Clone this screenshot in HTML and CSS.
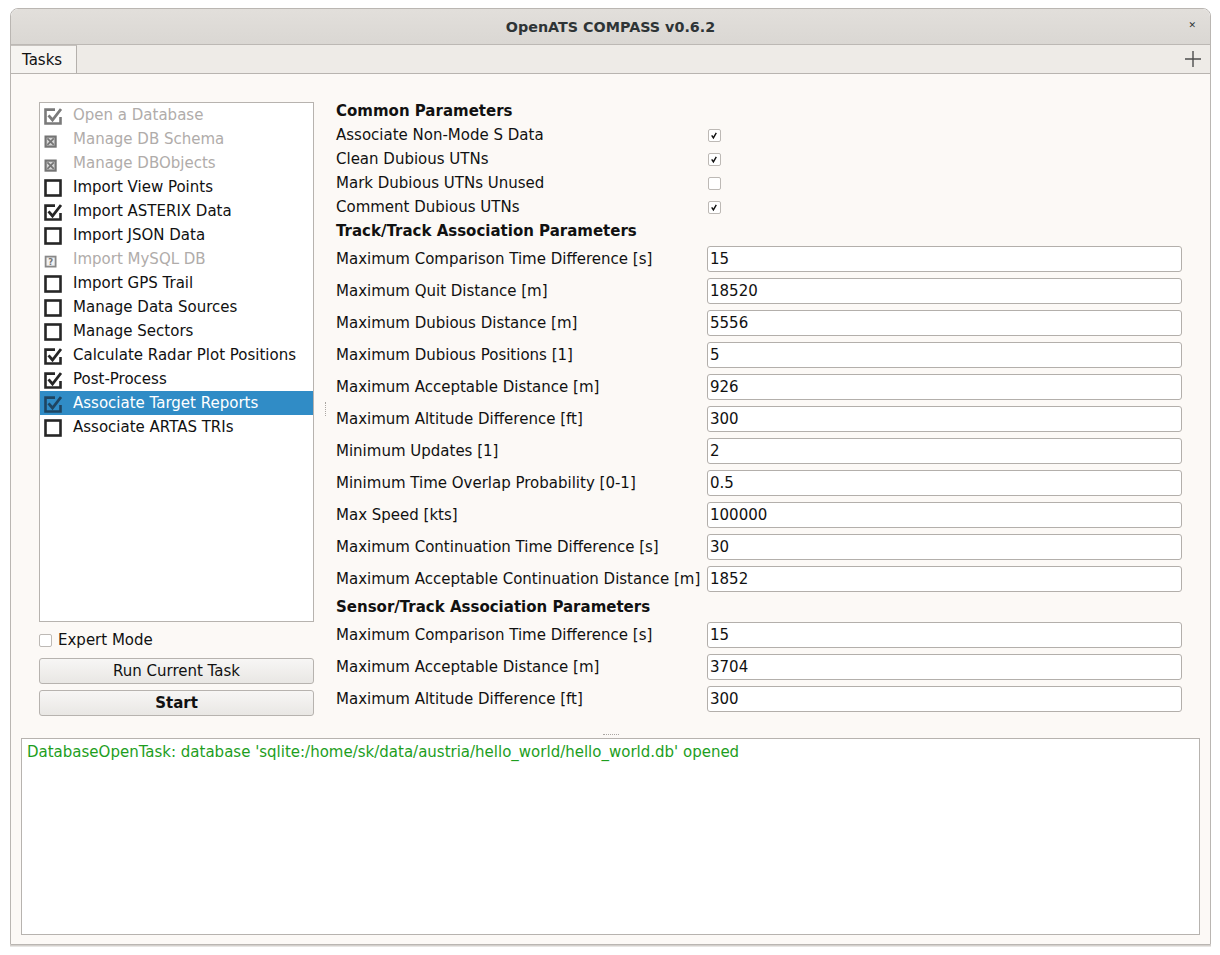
FILE: index.html
```html
<!DOCTYPE html>
<html>
<head>
<meta charset="utf-8">
<title>OpenATS COMPASS v0.6.2</title>
<link rel="stylesheet" href="styles.css">
</head>
<body>
<div class="window">
  <div class="titlebar">
    <span class="title">OpenATS COMPASS v0.6.2</span>
    <span class="close">&#x2715;</span>
  </div>
  <div class="tabbar">
    <div class="tab">Tasks</div>
    <svg class="plus" viewBox="0 0 16 16" width="16" height="16"><path d="M8 0V16M0 8H16" stroke="#4d4d4d" stroke-width="1.4" fill="none"/></svg>
  </div>
  <div class="page">
    <div class="upper">
      <div class="left">
        <div class="list">
          <div class="item disabled"><svg class="ico" viewBox="0 0 18 18"><path d="M11 2.6H1.5V16.5H16.5V10" fill="none" stroke="#7a7a7a" stroke-width="2.6"/><path d="M4.5 8.3L8.5 13L17 2" fill="none" stroke="#7a7a7a" stroke-width="2.8"/></svg>Open a Database</div>
          <div class="item disabled"><svg class="ico" viewBox="0 0 18 18"><rect x="1.6" y="5.6" width="10" height="10" fill="#d6d6d6" stroke="#747474" stroke-width="2.2"/><path d="M3.4 7.4L9.8 13.8M9.8 7.4L3.4 13.8" stroke="#747474" stroke-width="1.7"/></svg>Manage DB Schema</div>
          <div class="item disabled"><svg class="ico" viewBox="0 0 18 18"><rect x="1.6" y="5.6" width="10" height="10" fill="#d6d6d6" stroke="#747474" stroke-width="2.2"/><path d="M3.4 7.4L9.8 13.8M9.8 7.4L3.4 13.8" stroke="#747474" stroke-width="1.7"/></svg>Manage DBObjects</div>
          <div class="item"><svg class="ico" viewBox="0 0 18 18"><rect x="1.5" y="1.5" width="15" height="15" fill="none" stroke="#262626" stroke-width="2.6"/></svg>Import View Points</div>
          <div class="item"><svg class="ico" viewBox="0 0 18 18"><path d="M11 2.6H1.5V16.5H16.5V10" fill="none" stroke="#262626" stroke-width="2.6"/><path d="M4.5 8.3L8.5 13L17 2" fill="none" stroke="#262626" stroke-width="2.8"/></svg>Import ASTERIX Data</div>
          <div class="item"><svg class="ico" viewBox="0 0 18 18"><rect x="1.5" y="1.5" width="15" height="15" fill="none" stroke="#262626" stroke-width="2.6"/></svg>Import JSON Data</div>
          <div class="item disabled"><svg class="ico" viewBox="0 0 18 18"><rect x="1.6" y="5.6" width="10" height="10" fill="#f2f2f2" stroke="#888888" stroke-width="1.8"/><text x="6.6" y="14" text-anchor="middle" class="qmark">?</text></svg>Import MySQL DB</div>
          <div class="item"><svg class="ico" viewBox="0 0 18 18"><rect x="1.5" y="1.5" width="15" height="15" fill="none" stroke="#262626" stroke-width="2.6"/></svg>Import GPS Trail</div>
          <div class="item"><svg class="ico" viewBox="0 0 18 18"><rect x="1.5" y="1.5" width="15" height="15" fill="none" stroke="#262626" stroke-width="2.6"/></svg>Manage Data Sources</div>
          <div class="item"><svg class="ico" viewBox="0 0 18 18"><rect x="1.5" y="1.5" width="15" height="15" fill="none" stroke="#262626" stroke-width="2.6"/></svg>Manage Sectors</div>
          <div class="item"><svg class="ico" viewBox="0 0 18 18"><path d="M11 2.6H1.5V16.5H16.5V10" fill="none" stroke="#262626" stroke-width="2.6"/><path d="M4.5 8.3L8.5 13L17 2" fill="none" stroke="#262626" stroke-width="2.8"/></svg>Calculate Radar Plot Positions</div>
          <div class="item"><svg class="ico" viewBox="0 0 18 18"><path d="M11 2.6H1.5V16.5H16.5V10" fill="none" stroke="#262626" stroke-width="2.6"/><path d="M4.5 8.3L8.5 13L17 2" fill="none" stroke="#262626" stroke-width="2.8"/></svg>Post-Process</div>
          <div class="item selected"><svg class="ico" viewBox="0 0 18 18"><path d="M11 2.6H1.5V16.5H16.5V10" fill="none" stroke="#1f4561" stroke-width="2.6"/><path d="M4.5 8.3L8.5 13L17 2" fill="none" stroke="#1f4561" stroke-width="2.8"/></svg>Associate Target Reports</div>
          <div class="item"><svg class="ico" viewBox="0 0 18 18"><rect x="1.5" y="1.5" width="15" height="15" fill="none" stroke="#262626" stroke-width="2.6"/></svg>Associate ARTAS TRIs</div>
        </div>
        <label class="expert"><span class="cb"></span>Expert Mode</label>
        <div class="btn run">Run Current Task</div>
        <div class="btn start">Start</div>
      </div>
      <div class="vhandle"><span class="vdots"></span></div>
      <div class="right">
        <div class="heading">Common Parameters</div>
        <div class="row"><span class="lbl">Associate Non-Mode S Data</span><span class="cb checked"><svg viewBox="0 0 13 13" width="11" height="11"><path d="M3.2 6.3L5.2 9.3L8.6 3.4" fill="none" stroke="#111" stroke-width="1.7"/></svg></span></div>
        <div class="row"><span class="lbl">Clean Dubious UTNs</span><span class="cb checked"><svg viewBox="0 0 13 13" width="11" height="11"><path d="M3.2 6.3L5.2 9.3L8.6 3.4" fill="none" stroke="#111" stroke-width="1.7"/></svg></span></div>
        <div class="row"><span class="lbl">Mark Dubious UTNs Unused</span><span class="cb"></span></div>
        <div class="row"><span class="lbl">Comment Dubious UTNs</span><span class="cb checked"><svg viewBox="0 0 13 13" width="11" height="11"><path d="M3.2 6.3L5.2 9.3L8.6 3.4" fill="none" stroke="#111" stroke-width="1.7"/></svg></span></div>
        <div class="heading">Track/Track Association Parameters</div>
        <div class="irow"><span class="lbl">Maximum Comparison Time Difference [s]</span><span class="input">15</span></div>
        <div class="irow"><span class="lbl">Maximum Quit Distance [m]</span><span class="input">18520</span></div>
        <div class="irow"><span class="lbl">Maximum Dubious Distance [m]</span><span class="input">5556</span></div>
        <div class="irow"><span class="lbl">Maximum Dubious Positions [1]</span><span class="input">5</span></div>
        <div class="irow"><span class="lbl">Maximum Acceptable Distance [m]</span><span class="input">926</span></div>
        <div class="irow"><span class="lbl">Maximum Altitude Difference [ft]</span><span class="input">300</span></div>
        <div class="irow"><span class="lbl">Minimum Updates [1]</span><span class="input">2</span></div>
        <div class="irow"><span class="lbl">Minimum Time Overlap Probability [0-1]</span><span class="input">0.5</span></div>
        <div class="irow"><span class="lbl">Max Speed [kts]</span><span class="input">100000</span></div>
        <div class="irow"><span class="lbl">Maximum Continuation Time Difference [s]</span><span class="input">30</span></div>
        <div class="irow"><span class="lbl">Maximum Acceptable Continuation Distance [m]</span><span class="input">1852</span></div>
        <div class="heading">Sensor/Track Association Parameters</div>
        <div class="irow"><span class="lbl">Maximum Comparison Time Difference [s]</span><span class="input">15</span></div>
        <div class="irow"><span class="lbl">Maximum Acceptable Distance [m]</span><span class="input">3704</span></div>
        <div class="irow"><span class="lbl">Maximum Altitude Difference [ft]</span><span class="input">300</span></div>
      </div>
    </div>
    <div class="hhandle"><span class="hdots"></span></div>
    <div class="log"><span class="ok">DatabaseOpenTask: database 'sqlite:/home/sk/data/austria/hello_world/hello_world.db' opened</span></div>
  </div>
</div>
</body>
</html>
```

FILE: styles.css
```css
* { box-sizing: border-box; }
html, body {
  margin: 0;
  padding: 0;
  background: #ffffff;
  width: 1220px;
  height: 955px;
  overflow: hidden;
  font-family: "DejaVu Sans", "Liberation Sans", sans-serif;
  font-size: 15px;
  color: #111111;
}
.window {
  margin: 8px 0 0 10px;
  width: 1201px;
  height: 937px;
  border: 1px solid #bab6b2;
  border-radius: 8px 8px 0 0;
  box-shadow: 0 1px 0 #d4d0cc, 0 2px 0 #e8e6e4;
  display: flex;
  flex-direction: column;
  overflow: hidden;
}
.titlebar {
  height: 36px;
  flex: none;
  background: linear-gradient(#e2dfdb, #dad7d3);
  border-bottom: 1px solid #bcb8b4;
  border-radius: 7px 7px 0 0;
  display: flex;
  align-items: center;
  justify-content: center;
  position: relative;
}
.title {
  font-weight: bold;
  font-size: 14.3px;
  color: #2e3436;
}
.close {
  position: absolute;
  right: 14px;
  top: 11px;
  font-size: 9px;
  color: #2e3436;
}
.tabbar {
  height: 29px;
  flex: none;
  background: #eeebe7;
  border-bottom: 1px solid #b8b4b0;
  display: flex;
  align-items: stretch;
  justify-content: space-between;
}
.tab {
  width: 66px;
  background: #f6f4f1;
  border-right: 1px solid #b4b0ac;
  border-top: 1px solid #c6c2be;
  display: flex;
  align-items: center;
  padding-left: 11px;
  padding-top: 1px;
  font-size: 15px;
  color: #111;
}
.plus {
  align-self: center;
  margin-right: 9px;
  margin-top: -1px;
}
.page {
  flex: 1;
  background: #fcf9f6;
  display: flex;
  flex-direction: column;
  padding: 0 10px 9px 10px;
}
.upper {
  height: 656px;
  flex: none;
  display: flex;
  padding: 0 18px;
}
.left {
  width: 275px;
  flex: none;
  padding-top: 28px;
  display: flex;
  flex-direction: column;
}
.list {
  height: 520px;
  background: #ffffff;
  border: 1px solid #b7b3af;
}
.item {
  height: 24px;
  display: flex;
  align-items: flex-start;
  line-height: 24px;
  padding-left: 4px;
  white-space: nowrap;
}
.item.disabled { color: #b0acaa; }
.item.selected { background: #308cc6; color: #ffffff; }
.ico {
  width: 18px;
  height: 18px;
  flex: none;
  margin-top: 4px;
  margin-right: 11px;
}
.qmark {
  font-family: "DejaVu Sans", sans-serif;
  font-weight: bold;
  font-size: 8.5px;
  fill: #777777;
}
.expert {
  margin-top: 7px;
  height: 22px;
  display: flex;
  align-items: center;
  gap: 6px;
}
.cb {
  width: 13px;
  height: 13px;
  flex: none;
  background: #ffffff;
  border: 1px solid #bdb9b5;
  border-radius: 2px;
  display: inline-flex;
  align-items: center;
  justify-content: center;
}
.btn {
  height: 26px;
  border: 1px solid #b7b3af;
  border-radius: 3px;
  background: linear-gradient(#f7f6f5, #e9e7e4);
  display: flex;
  align-items: center;
  justify-content: center;
}
.run { margin-top: 7px; }
.start { margin-top: 6px; font-weight: bold; }
.vhandle {
  width: 22px;
  flex: none;
  display: flex;
  justify-content: center;
  padding-top: 328px;
}
.vdots {
  display: block;
  width: 1px;
  height: 14px;
  border-left: 1px dotted #aaa6a2;
}
.right {
  flex: 1;
  padding-top: 25px;
}
.heading {
  height: 24px;
  line-height: 24px;
  font-weight: bold;
}
.row {
  height: 24px;
  display: flex;
  align-items: center;
}
.lbl {
  width: 371px;
  flex: none;
  white-space: nowrap;
}
.row .cb { margin-left: 1px; }
.irow {
  height: 32px;
  display: flex;
  align-items: center;
}
.input {
  flex: 1;
  height: 26px;
  background: #ffffff;
  border: 1px solid #b3afab;
  border-radius: 3px;
  padding-left: 2px;
  line-height: 24px;
}
.hhandle {
  height: 8px;
  flex: none;
  display: flex;
  justify-content: center;
  align-items: flex-end;
  padding-bottom: 3px;
}
.hdots {
  display: block;
  width: 16px;
  height: 1px;
  border-top: 1px dotted #aaa6a2;
}
.log {
  flex: 1;
  background: #ffffff;
  border: 1px solid #b7b3af;
  padding: 4px 5px;
  line-height: 18px;
}
.ok { color: #1d9e1d; }
```
